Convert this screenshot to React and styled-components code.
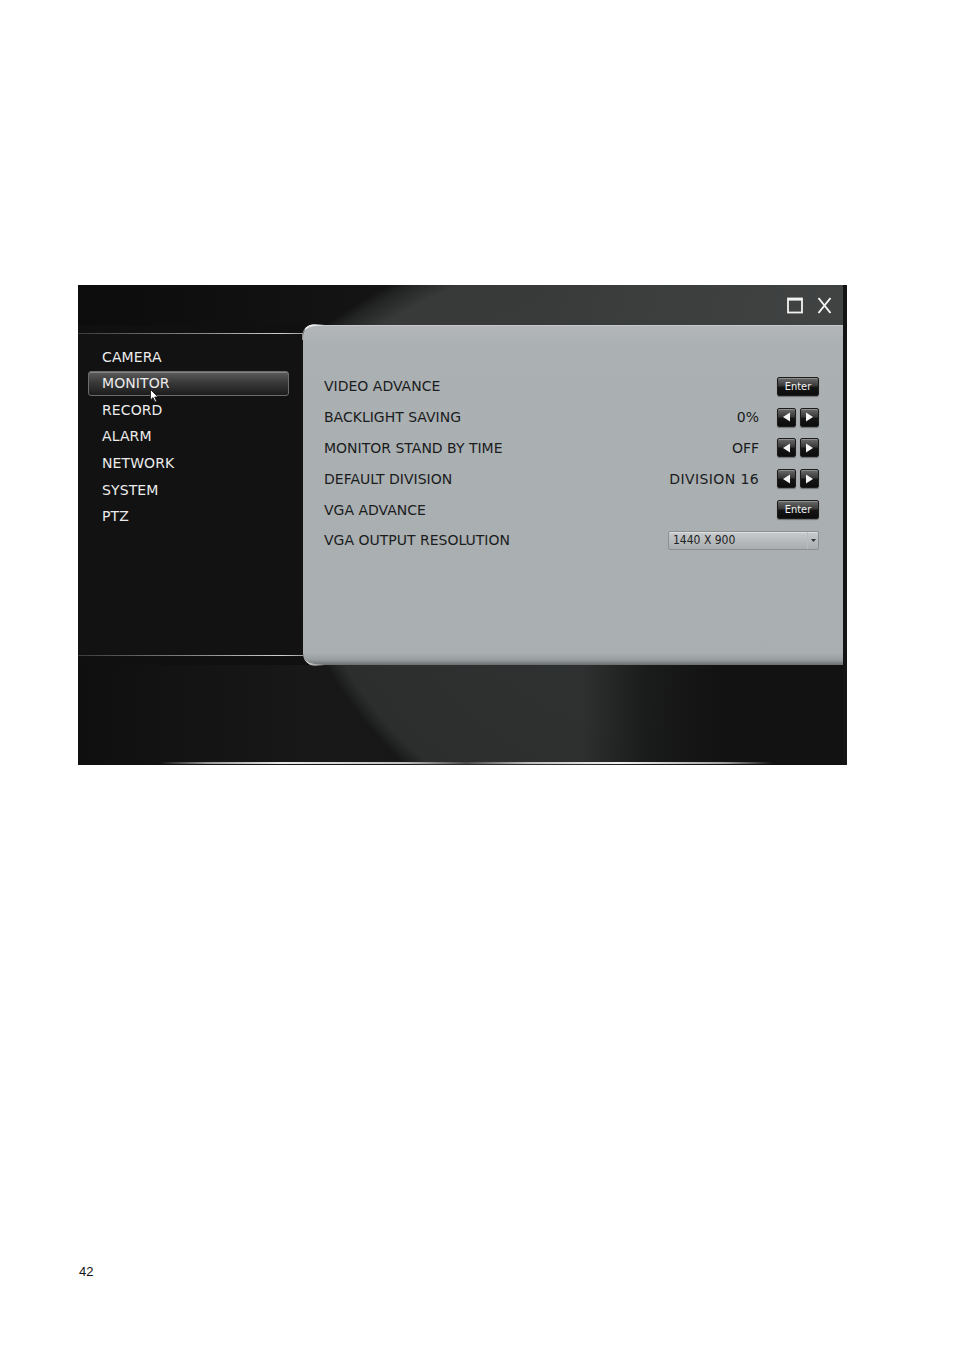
import React from 'react';
import styled, { createGlobalStyle } from 'styled-components';

const Global = createGlobalStyle`
  html, body { margin: 0; padding: 0; background: #ffffff; }
  body { font-family: "DejaVu Sans", "Liberation Sans", sans-serif; }
`;

const Page = styled.div`
  width: 954px;
  min-height: 1348px;
  padding: 285px 0 0 78px;
  box-sizing: border-box;
`;

const Screen = styled.div`
  width: 769px;
  height: 480px;
  display: flex;
  flex-direction: column;
  background: #111111;
  border-right: 4px solid #141414;
  box-sizing: border-box;
  overflow: hidden;
`;

const TitleBar = styled.div`
  height: 40px;
  flex: none;
  display: flex;
  align-items: center;
  justify-content: flex-end;
  gap: 14px;
  padding-right: 11px;
  background:
    linear-gradient(90deg, transparent 60%, rgba(80,83,83,0.35) 100%),
    radial-gradient(circle 640px at 620px 560px, #3f4242 0, #383a3a 95%, #222323 98.5%, transparent 100%),
    linear-gradient(90deg, #0c0c0c, #141414 40%, #1b1b1b);
`;

const Main = styled.div`
  height: 340px;
  flex: none;
  display: flex;
  background: #101010;
`;

const SideCol = styled.div`
  width: 225px;
  flex: none;
  display: flex;
  flex-direction: column;
  padding: 8px 0 9px;
  box-sizing: border-box;
`;

const Sidebar = styled.nav`
  position: relative;
  flex: 1;
  background: #121212;
  border-top: 1px solid;
  border-bottom: 1px solid;
  border-image: linear-gradient(90deg, #3a3a3a, #8a8a8a 55%, #cfcfcf 90%, #9a9a9a) 1;
  padding: 10px 14px 0 10px;
  display: flex;
  flex-direction: column;
  gap: 1.67px;
`;

const MenuItem = styled.div`
  box-sizing: border-box;
  height: 25px;
  display: flex;
  align-items: center;
  padding-left: 13px;
  border-radius: 3px;
  font-size: 14px;
  letter-spacing: 0.1px;
  color: #ececec;
  border: 1px solid ${p => (p.$active ? '#6c6c6c' : 'transparent')};
  background: ${p =>
    p.$active
      ? 'linear-gradient(180deg, #5c5c5c 0%, #3a3a3a 45%, #1c1c1c 100%)'
      : 'transparent'};
  box-shadow: ${p => (p.$active ? 'inset 0 1px 0 rgba(255,255,255,0.25)' : 'none')};
`;

const Cursor = styled.svg`
  position: absolute;
  left: 72px;
  top: 55px;
  width: 9px;
  height: 14px;
`;

const Panel = styled.section`
  position: relative;
  flex: 1;
  border-radius: 12px 0 0 12px;
  background: linear-gradient(180deg, #b3b7b9 0%, #abb0b2 6%, #a9aeb0 96.5%, #979c9e 98.5%, #6a6e70 100%);
  box-shadow: inset 0 1px 0 rgba(255,255,255,0.25);
  padding: 46px 24px 0 21px;
  box-sizing: border-box;

  &::before {
    content: '';
    position: absolute;
    left: 0;
    top: 0;
    width: 22px;
    height: 14px;
    border-top-left-radius: 12px;
    border-top: 2px solid rgba(255,255,255,0.9);
    border-left: 1px solid rgba(255,255,255,0.5);
    -webkit-mask-image: linear-gradient(90deg, #000 40%, transparent);
    mask-image: linear-gradient(90deg, #000 40%, transparent);
    margin: -1px 0 0 -1px;
  }
  &::after {
    content: '';
    position: absolute;
    left: 0;
    bottom: 0;
    width: 22px;
    height: 12px;
    border-bottom-left-radius: 12px;
    border-bottom: 2px solid rgba(230,230,230,0.8);
    -webkit-mask-image: linear-gradient(90deg, #000 30%, transparent);
    mask-image: linear-gradient(90deg, #000 30%, transparent);
    margin-bottom: -1px;
  }
`;

const Rows = styled.div`
  display: grid;
  grid-template-columns: 1fr auto 42px;
  grid-auto-rows: 30.8px;
  column-gap: 18px;
  align-items: center;
`;

const Label = styled.div`
  font-size: 14px;
  color: #1a1c1d;
`;

const Value = styled.div`
  font-size: 14px;
  letter-spacing: ${p => (p.$wide ? '0.4px' : '0')};
  color: #1a1c1d;
  text-align: right;
`;

const Controls = styled.div`
  display: flex;
  justify-content: space-between;
`;

const btnSkin = `
  box-sizing: border-box;
  height: 19px;
  border: 1px solid #1c1c1c;
  border-radius: 2px;
  background: linear-gradient(180deg, #6a6a6a 0%, #3a3a3a 45%, #151515 55%, #0c0c0c 100%);
  box-shadow: 0 1px 1px rgba(0,0,0,0.35), inset 0 1px 0 rgba(255,255,255,0.25);
  display: flex;
  align-items: center;
  justify-content: center;
`;

const EnterButton = styled.div`
  ${btnSkin}
  width: 42px;
  color: #f2f2f2;
  font-family: "DejaVu Sans Condensed", "DejaVu Sans", sans-serif;
  font-size: 11px;
`;

const ArrowButton = styled.div`
  ${btnSkin}
  width: 19px;
`;

const Select = styled.div`
  grid-column: 2 / 4;
  justify-self: end;
  width: 151px;
  height: 19px;
  box-sizing: border-box;
  display: flex;
  border: 1px solid #8c9092;
  border-radius: 2px;
  background: linear-gradient(180deg, #c9cccd 0%, #b7babc 55%, #a9adaf 100%);
  box-shadow: inset 0 1px 0 rgba(255,255,255,0.4);
`;

const SelectText = styled.div`
  flex: 1;
  padding-left: 4px;
  font-family: "DejaVu Sans Condensed", "DejaVu Sans", sans-serif;
  font-size: 12px;
  line-height: 17px;
  color: #202223;
`;

const SelectCaret = styled.div`
  width: 10px;
  border-left: 1px solid #b9bcbe;
  display: flex;
  align-items: center;
  justify-content: center;
`;

const Footer = styled.div`
  flex: 1;
  display: flex;
  flex-direction: column;
  justify-content: flex-end;
  padding-bottom: 1px;
  background:
    linear-gradient(90deg, transparent 0, transparent 66%, rgba(18,18,18,0.7) 74%, #121212 84%),
    radial-gradient(circle 405px at 600px -200px, #323535 0, #2c2e2e 96%, #1d1e1e 99%, transparent 100%),
    linear-gradient(90deg, #0f0f0f, #181818 30%, #141414);
`;

const GlowLine = styled.div`
  height: 2px;
  margin: 0 70px 0 82px;
  background: linear-gradient(90deg, transparent, #9a9a9a 8%, #e8e8e8 20%, #bdbdbd 40%, #4a4a4a 50%, #bcbcbc 60%, #f0f0f0 75%, #a0a0a0 92%, transparent);
`;

const PageNumber = styled.div`
  margin: 499px 0 0 1px;
  font-family: "Liberation Sans", Arial, sans-serif;
  font-size: 13px;
  line-height: 16px;
  color: #111;
`;

const Triangle = ({ dir }) => (
  <svg width="9" height="10" viewBox="0 0 9 10">
    {dir === 'left'
      ? <path d="M1 5 L8 0.5 L8 9.5 Z" fill="#f4f4f4" />
      : <path d="M8 5 L1 0.5 L1 9.5 Z" fill="#f4f4f4" />}
  </svg>
);

const Stepper = () => (
  <Controls>
    <ArrowButton><Triangle dir="left" /></ArrowButton>
    <ArrowButton><Triangle dir="right" /></ArrowButton>
  </Controls>
);

const menu = ['CAMERA', 'MONITOR', 'RECORD', 'ALARM', 'NETWORK', 'SYSTEM', 'PTZ'];

export default function App() {
  return (
    <>
      <Global />
      <Page>
        <Screen>
          <TitleBar>
            <svg width="16" height="17" viewBox="0 0 16 17">
              <rect x="1" y="1.5" width="14" height="14" fill="none" stroke="#f2f2f2" strokeWidth="1.8" />
              <rect x="1" y="1" width="14" height="2.6" fill="#f2f2f2" />
            </svg>
            <svg width="15" height="17" viewBox="0 0 15 17">
              <path d="M1.5 1 L13.5 16 M13.5 1 L1.5 16" stroke="#f2f2f2" strokeWidth="2" />
            </svg>
          </TitleBar>
          <Main>
            <SideCol>
              <Sidebar>
                {menu.map(m => (
                  <MenuItem key={m} $active={m === 'MONITOR'}>{m}</MenuItem>
                ))}
                <Cursor viewBox="0 0 9 14">
                  <path d="M0.5 0.5 L0.5 11 L3 8.6 L5 13 L6.6 12.3 L4.7 8 L8 8 Z" fill="#ffffff" stroke="#111" strokeWidth="0.8" />
                </Cursor>
              </Sidebar>
            </SideCol>
            <Panel>
              <Rows>
                <Label>VIDEO ADVANCE</Label>
                <Value />
                <EnterButton>Enter</EnterButton>

                <Label>BACKLIGHT SAVING</Label>
                <Value>0%</Value>
                <Stepper />

                <Label>MONITOR STAND BY TIME</Label>
                <Value>OFF</Value>
                <Stepper />

                <Label>DEFAULT DIVISION</Label>
                <Value $wide>DIVISION 16</Value>
                <Stepper />

                <Label>VGA ADVANCE</Label>
                <Value />
                <EnterButton>Enter</EnterButton>

                <Label>VGA OUTPUT RESOLUTION</Label>
                <Select>
                  <SelectText>1440 X 900</SelectText>
                  <SelectCaret>
                    <svg width="5" height="3" viewBox="0 0 5 3"><path d="M0 0 H5 L2.5 3 Z" fill="#333" /></svg>
                  </SelectCaret>
                </Select>
              </Rows>
            </Panel>
          </Main>
          <Footer>
            <GlowLine />
          </Footer>
        </Screen>
        <PageNumber>42</PageNumber>
      </Page>
    </>
  );
}
